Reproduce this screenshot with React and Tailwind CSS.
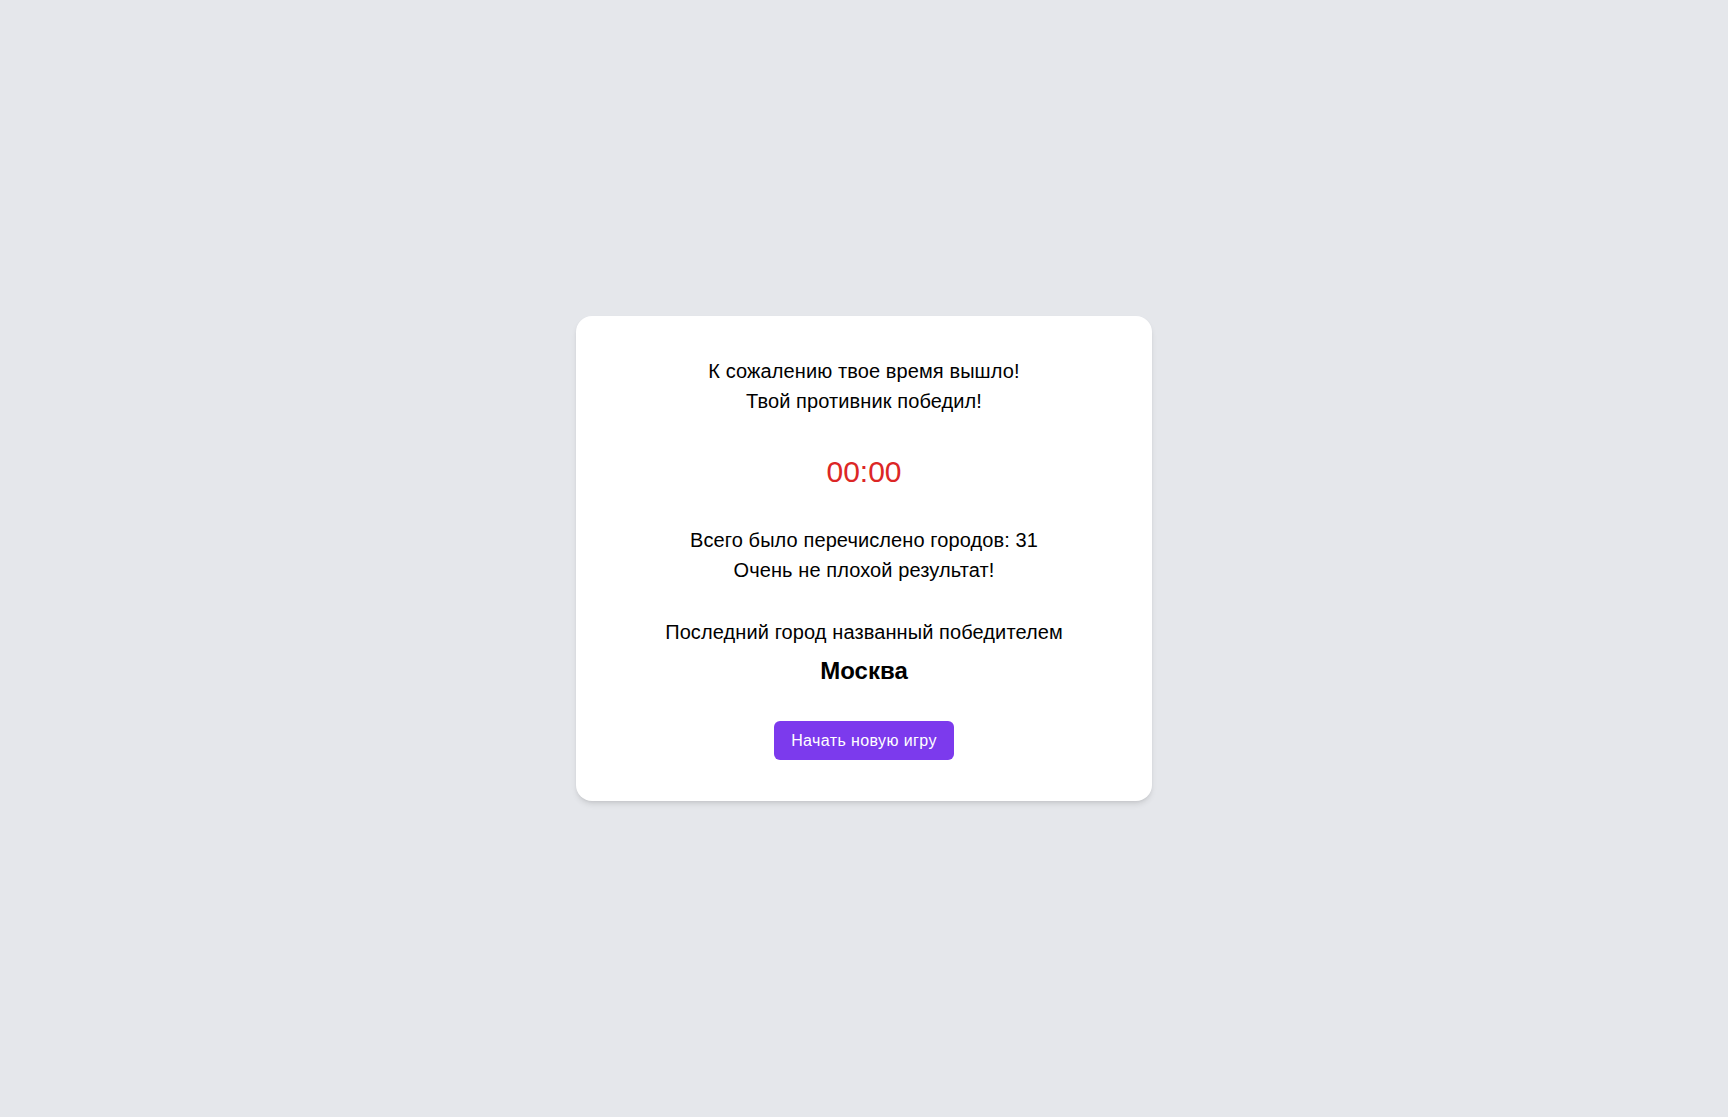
export default function App() {
  return (
    <div
      className="min-h-screen w-full bg-[#e5e7eb] flex items-center justify-center"
      style={{ fontFamily: '"Liberation Sans", Arial, Helvetica, sans-serif' }}
    >
      <div className="w-[576px] bg-white rounded-2xl shadow-md px-10 pt-10 pb-[41px] flex flex-col items-center text-center text-black">
        <div className="text-xl leading-[30px] tracking-[0.1px]">
          <p>К сожалению твое время вышло!</p>
          <p>Твой противник победил!</p>
        </div>
        <div className="mt-[38px] text-3xl leading-9 text-[#dc2626]">00:00</div>
        <div className="mt-[35px] text-xl leading-[30px] tracking-[0.1px]">
          <p>Всего было перечислено городов: 31</p>
          <p>Очень не плохой результат!</p>
        </div>
        <p className="mt-[32px] text-xl leading-[30px] tracking-[0.1px]">Последний город названный победителем</p>
        <p className="mt-[8px] text-2xl leading-8 font-semibold">Москва</p>
        <button className="mt-[34px] bg-[#7c3aed] text-white text-base tracking-[0.4px] px-[17px] py-[7px] leading-[25px] rounded-md">
          Начать новую игру
        </button>
      </div>
    </div>
  );
}
